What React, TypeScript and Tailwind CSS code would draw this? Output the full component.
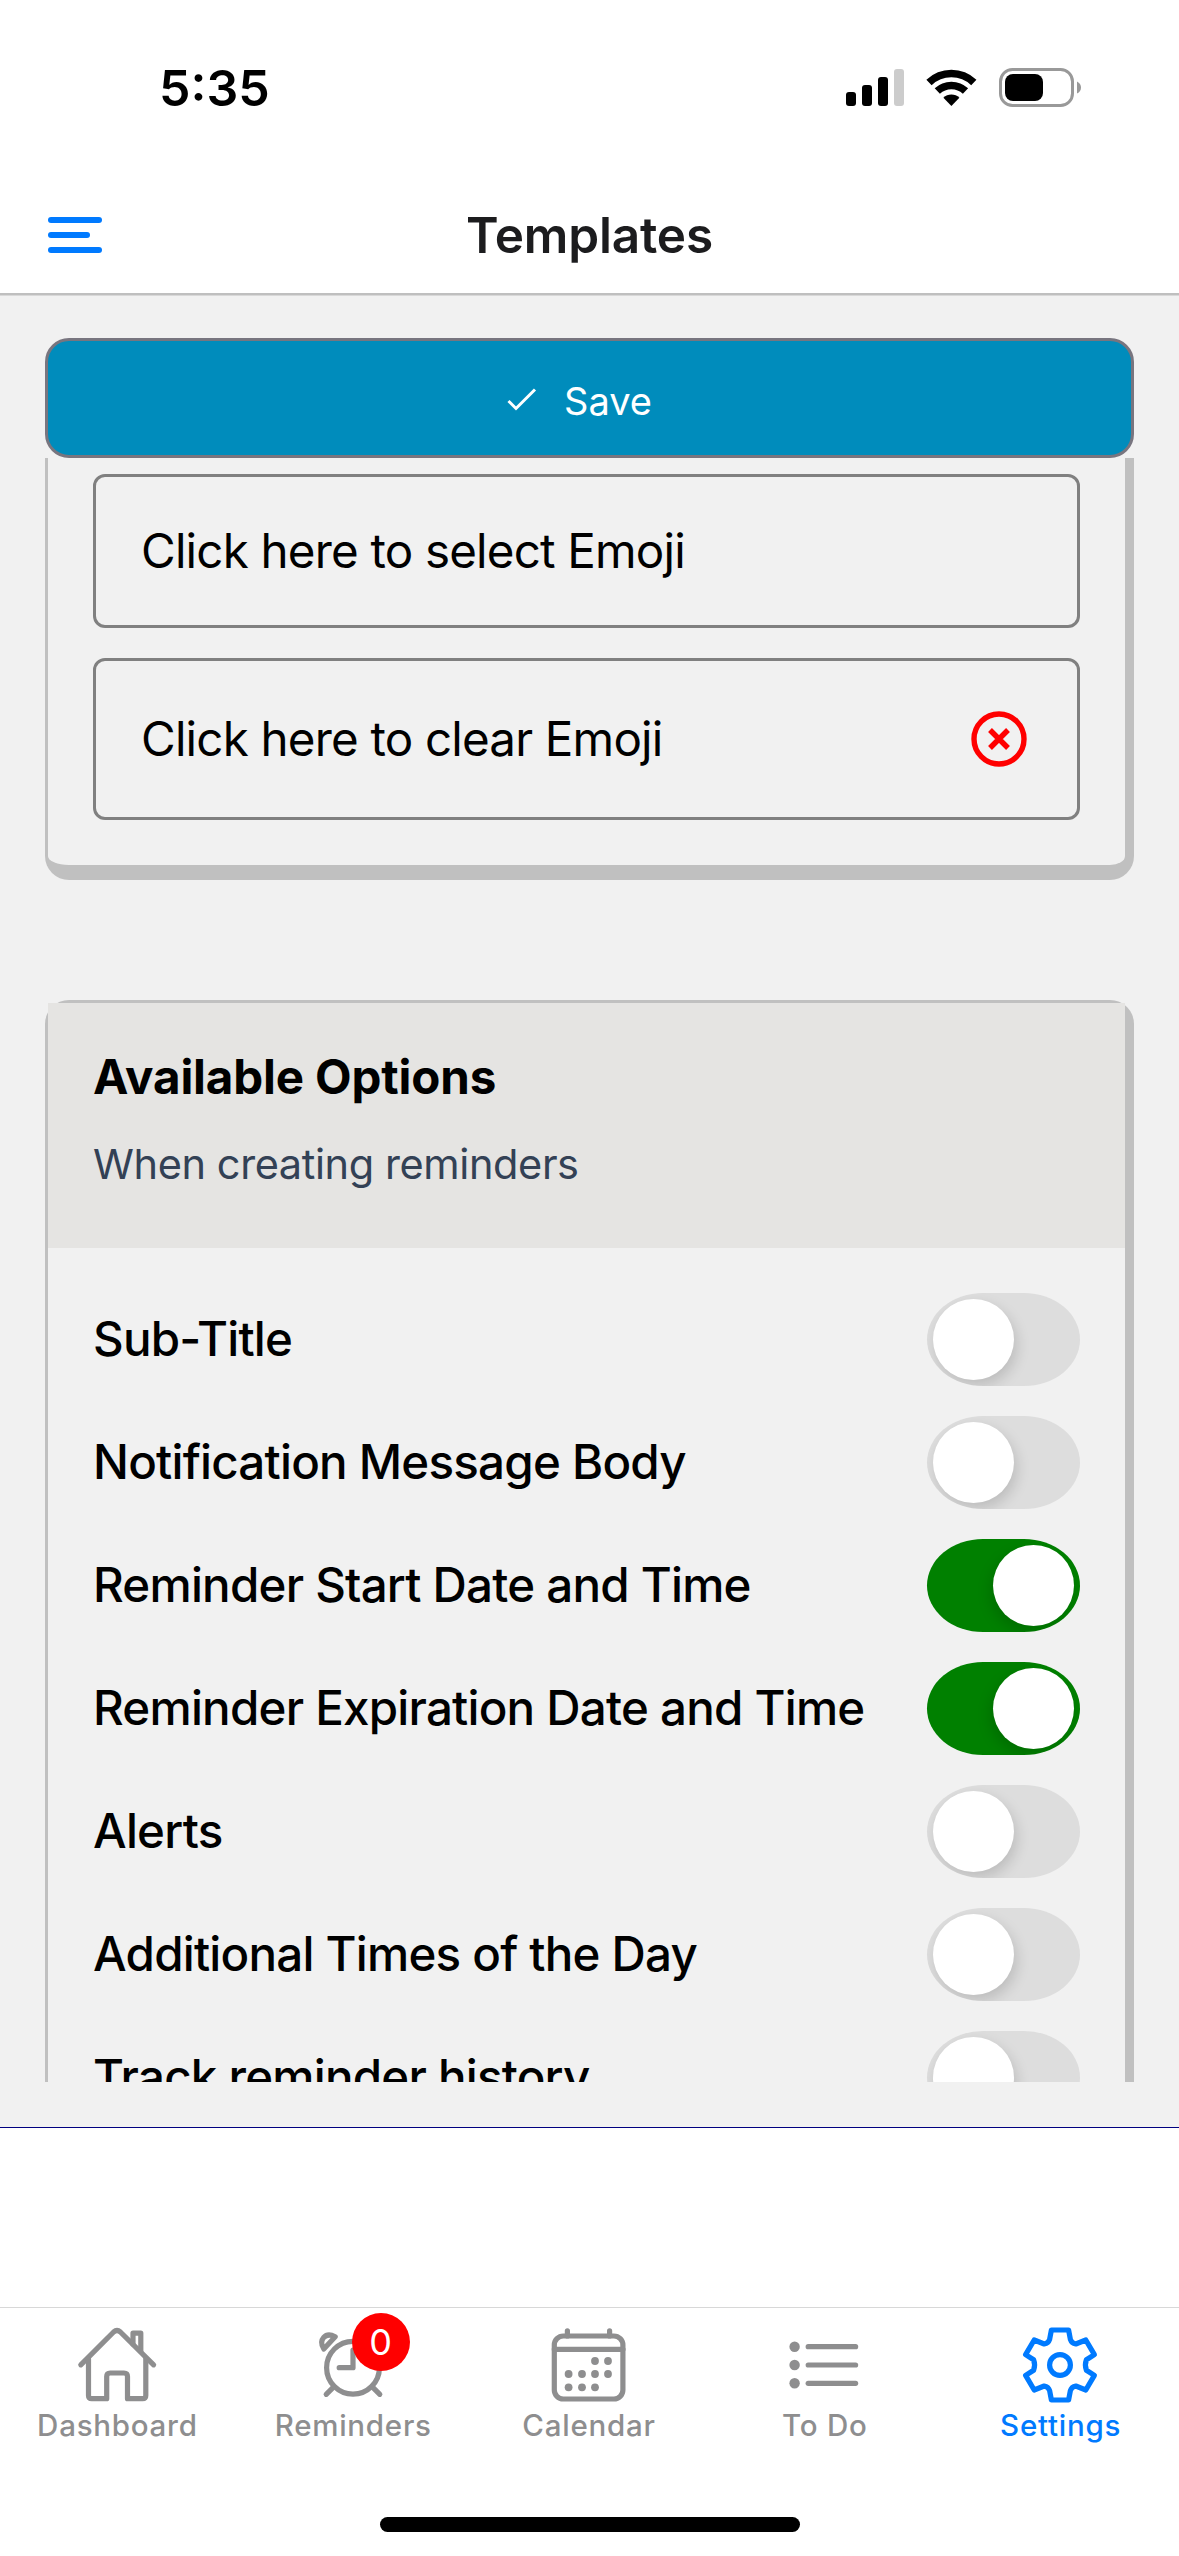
import { ReactNode } from 'react';

const options = [
  { label: 'Sub-Title', on: false },
  { label: 'Notification Message Body', on: false },
  { label: 'Reminder Start Date and Time', on: true },
  { label: 'Reminder Expiration Date and Time', on: true },
  { label: 'Alerts', on: false },
  { label: 'Additional Times of the Day', on: false },
  { label: 'Track reminder history', on: false },
];

function StatusIcons() {
  return (
    <svg width="236" height="40" viewBox="0 0 236 40">
      <rect x="0" y="24" width="10" height="14" rx="3" />
      <rect x="16" y="17" width="10" height="21" rx="3" />
      <rect x="32" y="9" width="10" height="29" rx="3" />
      <rect x="48" y="1" width="10" height="37" rx="3" fill="#cccccc" />
      <g transform="translate(105.4 38)">
        <path d="M-22.4 -23.6 A32.5 32.5 0 0 1 22.4 -23.6" fill="none" stroke="#000" strokeWidth="7.6" />
        <path d="M-14.1 -14.9 A20.5 20.5 0 0 1 14.1 -14.9" fill="none" stroke="#000" strokeWidth="7.6" />
        <path d="M0 0 L-8 -8.2 A11.5 11.5 0 0 1 8 -8.2 Z" />
      </g>
      <rect x="154.5" y="1.5" width="72" height="36" rx="12" fill="none" stroke="#999999" strokeWidth="3" />
      <rect x="159" y="6" width="38" height="27" rx="8" />
      <path d="M231 13.5 Q235 15.5 235 19.5 Q235 23.5 231 25.5 Z" fill="#999999" />
    </svg>
  );
}

function TabIcon({ children }: { children: ReactNode }) {
  return (
    <svg width="84" height="84" viewBox="0 0 84 84" fill="none" stroke="currentColor" strokeWidth="5.2" strokeLinecap="round" strokeLinejoin="round">
      {children}
    </svg>
  );
}

function HomeIcon() {
  return (
    <TabIcon>
      <path d="M4.8 40.8 L37.6 8 Q41 5 44.4 8 L77.6 40.8" />
      <path d="M12.5 35 V71.5 Q12.5 74.7 15.7 74.7 H30.7 V52.5 Q30.7 49 34.2 49 H48 Q51.5 49 51.5 52.5 V74.7 H66.5 Q69.8 74.7 69.8 71.5 V35" />
      <path d="M57 20 V9.2 H64.8 V27" />
    </TabIcon>
  );
}

function AlarmIcon() {
  return (
    <TabIcon>
      <g transform="translate(-0.8 0)">
        <circle cx="41.8" cy="43.7" r="26.4" />
        <path d="M41.8 26 V43.7 H28" />
        <path d="M15 70.3 L22 63.3 M68.6 70.3 L61.6 63.3" />
        <path d="M12.6 25 C7 16 14 7.5 24 12.8 Z" />
        <path d="M71 25 C76.6 16 69.6 7.5 59.6 12.8 Z" />
      </g>
    </TabIcon>
  );
}

const calendarDots = [
  [48, 37], [61, 37],
  [21.6, 50], [35, 50], [48, 50], [61, 50],
  [21.6, 63.3], [35, 63.3], [48, 63.3],
];

function CalendarIcon() {
  return (
    <TabIcon>
      <rect x="7.3" y="12" width="68.6" height="63" rx="9" />
      <path d="M7.3 25.3 H76 M20.4 6.8 V12 M62.6 6.8 V12" />
      {calendarDots.map(([x, y]) => (
        <circle key={`${x}-${y}`} cx={x} cy={y} r="3.9" fill="currentColor" stroke="none" />
      ))}
    </TabIcon>
  );
}

function ListIcon() {
  return (
    <TabIcon>
      {[22.7, 41, 59.3].map(y => (
        <g key={y}>
          <circle cx="11.6" cy={y} r="5.2" fill="currentColor" stroke="none" />
          <path d={`M25.2 ${y} H72.6`} />
        </g>
      ))}
    </TabIcon>
  );
}

function GearIcon() {
  return (
    <TabIcon>
      <g transform="translate(41 41)">
        <path d="M-8.6 -35 H8.6 L10.4 -25.5 Q11.6 -21.8 15.8 -21 L25.8 -25 L34.4 -10.4 L26.4 -5.2 Q24.4 0 26.4 5.2 L34.4 10.4 L25.8 25 L15.8 21 Q11.6 21.8 10.4 25.5 L8.6 35 H-8.6 L-10.4 25.5 Q-11.6 21.8 -15.8 21 L-25.8 25 L-34.4 10.4 L-26.4 5.2 Q-24.4 0 -26.4 -5.2 L-34.4 -10.4 L-25.8 -25 L-15.8 -21 Q-11.6 -21.8 -10.4 -25.5 Z" />
        <circle r="10.4" />
      </g>
    </TabIcon>
  );
}

const tabs = [
  { label: 'Dashboard', icon: <HomeIcon /> },
  { label: 'Reminders', icon: <AlarmIcon />, badge: 0 },
  { label: 'Calendar', icon: <CalendarIcon /> },
  { label: 'To Do', icon: <ListIcon /> },
  { label: 'Settings', icon: <GearIcon />, active: true },
];

function Toggle({ on }: { on: boolean }) {
  return (
    <div className={`flex h-[93px] w-[153px] shrink-0 items-center overflow-hidden rounded-[56px/46.5px] px-1.5 ${on ? 'justify-end bg-[#008000]' : 'bg-[#dddddd]'}`}>
      <div className={`size-[81px] rounded-full bg-white ${on ? 'shadow-[-3px_6px_14px_rgba(0,0,0,0.15)]' : 'shadow-[3px_6px_14px_rgba(0,0,0,0.15)]'}`} />
    </div>
  );
}

export default function App() {
  return (
    <div className="flex h-[2556px] w-[1179px] flex-col overflow-hidden bg-white font-[Inter,sans-serif] text-black">
      <header className="relative h-[295px] shrink-0 border-b-2 border-[#bfbfbf] shadow-[0_1px_0_#d8d8d8]">
        <div className="flex h-[176px] items-center justify-between pr-[97px] pl-[159px]">
          <span className="text-[50px] font-semibold">5:35</span>
          <StatusIcons />
        </div>
        <div className="grid h-[118px] grid-cols-3 items-center px-12">
          <div className="flex flex-col gap-[9px]">
            <span className="h-1.5 w-[54px] rounded-full bg-[#007aff]" />
            <span className="h-1.5 w-[42px] rounded-full bg-[#007aff]" />
            <span className="h-1.5 w-[54px] rounded-full bg-[#007aff]" />
          </div>
          <h1 className="text-center text-[49.5px] font-semibold tracking-[-0.15px] text-[#1c1c1e]">Templates</h1>
        </div>
      </header>

      <main className="flex h-[1833px] shrink-0 flex-col border-b border-[#000080] bg-[#f1f1f1] px-[45px] pt-[43px] pb-[45px]">
        <button className="flex h-[120px] shrink-0 items-center justify-center gap-[27px] rounded-[24px] border-3 border-[#78757f] bg-[#008cbc] pr-5 text-[38px] text-white">
          <svg width="30" height="24" viewBox="0 0 30 24" fill="none" stroke="currentColor" strokeWidth="3" className="mt-1">
            <path d="M1.5 13 L9 20.5 L28 1.5" />
          </svg>
          <span className="pt-1.5">Save</span>
        </button>

        <div className="min-h-0 flex-1 overflow-hidden">
          <section className="flex flex-col gap-[30px] rounded-b-[24px] border-r-9 border-b-15 border-l-3 border-[#c0c0c0] px-[45px] pt-4 pb-[45px] text-[47.5px] tracking-[-0.8px]">
            <div className="flex h-[154px] items-center rounded-xl border-3 border-[#808080] px-[45px]">Click here to select Emoji</div>
            <div className="flex h-[162px] items-center justify-between rounded-xl border-3 border-[#808080] pr-[50px] pl-[45px]">
              Click here to clear Emoji
              <svg width="56" height="56" viewBox="0 0 56 56" fill="none" stroke="#ff0000" strokeWidth="5.4">
                <circle cx="28" cy="28" r="25" />
                <path d="M19 19 L37 37 M37 19 L19 37" />
              </svg>
            </div>
          </section>

          <section className="mt-[120px] rounded-t-[24px] border-t-3 border-r-9 border-l-3 border-[#c0c0c0]">
            <div className="h-[245px] bg-[#e5e4e2] px-[45px] pt-[45px]">
              <h2 className="text-[47.5px] leading-[57px] font-bold tracking-[-0.15px]">Available Options</h2>
              <p className="mt-[34px] text-[41.5px] leading-[50px] tracking-[-0.4px] text-[#334155]">When creating reminders</p>
            </div>
            <div className="flex flex-col gap-[30px] px-[45px] pt-[45px]">
              {options.map(o => (
                <div key={o.label} className="flex items-center justify-between text-[47.5px] font-medium tracking-[-0.77px]">
                  <span className="pb-0.5 whitespace-nowrap">{o.label}</span>
                  <Toggle on={o.on} />
                </div>
              ))}
            </div>
          </section>
        </div>
      </main>

      <nav className="mt-[179px] grid h-[210px] shrink-0 grid-cols-5 border-t border-[#d8d8d8] pt-4">
        {tabs.map(t => (
          <div key={t.label} className={`flex flex-col items-center ${t.active ? 'text-[#007aff]' : 'text-[#8e8e8f]'}`}>
            <div className="relative">
              {t.icon}
              {t.badge !== undefined && (
                <span className="absolute -top-[11px] left-10 flex size-[58px] items-center justify-center rounded-full bg-[#ff0000] text-[36px] text-white">{t.badge}</span>
              )}
            </div>
            <span className="-mt-px pr-px text-[29.5px] leading-9 font-medium tracking-[0.75px]">{t.label}</span>
          </div>
        ))}
      </nav>

      <div className="mx-auto h-[15px] w-[420px] rounded-full bg-black" />
    </div>
  );
}
